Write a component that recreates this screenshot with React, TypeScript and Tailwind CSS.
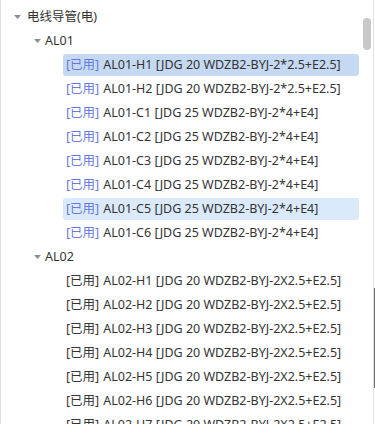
import React from "react";

type Leaf = { code: string; spec: string; used: boolean };

const al01: Leaf[] = [
  { code: "AL01-H1", spec: "[JDG 20 WDZB2-BYJ-2*2.5+E2.5]", used: true },
  { code: "AL01-H2", spec: "[JDG 20 WDZB2-BYJ-2*2.5+E2.5]", used: true },
  { code: "AL01-C1", spec: "[JDG 25 WDZB2-BYJ-2*4+E4]", used: true },
  { code: "AL01-C2", spec: "[JDG 25 WDZB2-BYJ-2*4+E4]", used: true },
  { code: "AL01-C3", spec: "[JDG 25 WDZB2-BYJ-2*4+E4]", used: true },
  { code: "AL01-C4", spec: "[JDG 25 WDZB2-BYJ-2*4+E4]", used: true },
  { code: "AL01-C5", spec: "[JDG 25 WDZB2-BYJ-2*4+E4]", used: true },
  { code: "AL01-C6", spec: "[JDG 25 WDZB2-BYJ-2*4+E4]", used: true },
];

const al02: Leaf[] = [1, 2, 3, 4, 5, 6, 7].map((n) => ({
  code: `AL02-H${n}`,
  spec: "[JDG 20 WDZB2-BYJ-2X2.5+E2.5]",
  used: false,
}));

function Caret() {
  return (
    <svg width="7" height="4" viewBox="0 0 7 4" className="shrink-0">
      <path d="M0 0 L7 0 L3.5 4 Z" fill="#8c8c8c" />
    </svg>
  );
}

function LeafRow({ leaf, state }: { leaf: Leaf; state?: "selected" | "hover" }) {
  const bg =
    state === "selected" ? "bg-[#c5daf2]" : state === "hover" ? "bg-[#dbeafb]" : "";
  return (
    <div className="h-6 flex items-center pl-[62px] pr-[16px]">
      <div className={`h-[22px] flex-1 flex items-center pl-[3px] rounded-[3px] whitespace-nowrap ${bg}`}>
        <span className={leaf.used ? "text-[#6579e0]" : "text-[#333]"}>[已用]</span>
        <span className="ml-[4px]">{leaf.code} {leaf.spec}</span>
      </div>
    </div>
  );
}

export default function App() {
  return (
    <div
      className="relative w-[375px] h-[424px] overflow-hidden bg-white text-[12.5px] text-[#333] border-l border-[#dcdcdc]"
      style={{ fontFamily: '"Noto Sans", "Noto Sans CJK SC", sans-serif' }}
    >
      <div className="pt-[5px]">
        <div className="h-6 flex items-center gap-[6px] pl-[13px]">
          <Caret />
          <span>电线导管(电)</span>
        </div>
        <div className="h-6 flex items-center gap-[4px] pl-[33px]">
          <Caret />
          <span>AL01</span>
        </div>
        {al01.map((l, i) => (
          <LeafRow key={l.code} leaf={l} state={i === 0 ? "selected" : i === 6 ? "hover" : undefined} />
        ))}
        <div className="h-6 flex items-center gap-[4px] pl-[33px]">
          <Caret />
          <span>AL02</span>
        </div>
        {al02.map((l) => (
          <LeafRow key={l.code} leaf={l} />
        ))}
      </div>
      {/* scrollbar */}
      <div className="absolute right-[4px] top-[18px] w-[8px] h-[32px] rounded-full bg-[#c8c8c8]" />
      <div className="absolute right-[1px] top-0 bottom-0 w-px bg-[#e0e0e0]" />
      <div className="absolute right-0 top-[288px] h-[100px] w-px bg-[#6b6b6b]" />
    </div>
  );
}
